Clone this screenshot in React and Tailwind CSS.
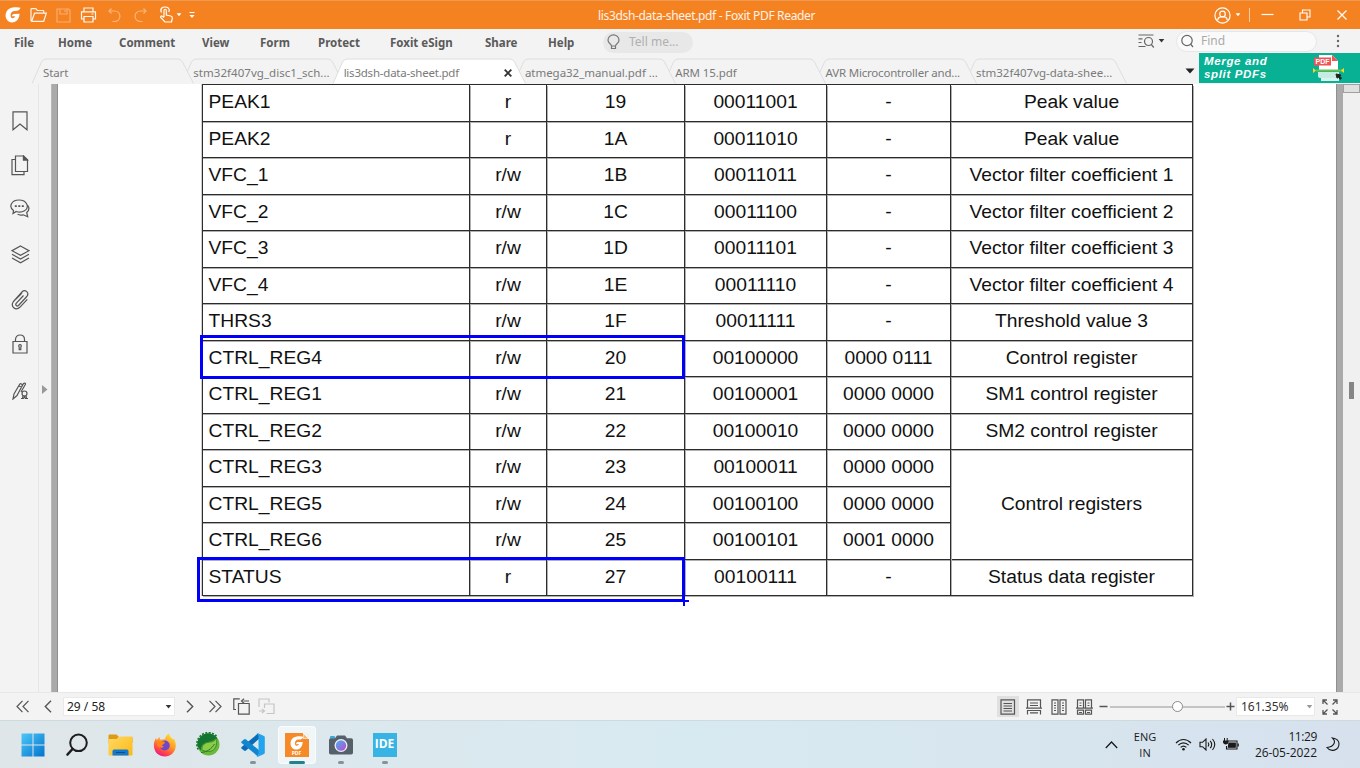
import React from "react";

const MENU = [
  ["File", "w-[44px]"],
  ["Home", "w-[61px]"],
  ["Comment", "w-[83px]"],
  ["View", "w-[58px]"],
  ["Form", "w-[58px]"],
  ["Protect", "w-[72px]"],
  ["Foxit eSign", "w-[95px]"],
  ["Share", "w-[63px]"],
  ["Help", "w-[55px]"],
];

const TABS = [
  { label: "Start", z: "z-[7]", pad: "pl-[11px] tracking-[-0.1px]" },
  { label: "stm32f407vg_disc1_sch...", z: "z-[6]", pad: "pl-[11px] tracking-[0.04px]" },
  { label: "lis3dsh-data-sheet.pdf", z: "z-[9]", pad: "pl-[11px] tracking-[-0.22px]", active: true },
  { label: "atmega32_manual.pdf ...", z: "z-[4]", pad: "pl-[11px] tracking-[-0.04px]" },
  { label: "ARM 15.pdf", z: "z-[3]", pad: "pl-[11px] tracking-[-0.1px]" },
  { label: "AVR Microcontroller and...", z: "z-[2]", pad: "pl-[11px] tracking-[-0.2px]" },
  { label: "stm32f407vg-data-shee...", z: "z-[1]", pad: "pl-[11px]" },
];

const ROWS = [
  ["PEAK1", "r", "19", "00011001", "-", "Peak value"],
  ["PEAK2", "r", "1A", "00011010", "-", "Peak value"],
  ["VFC_1", "r/w", "1B", "00011011", "-", "Vector filter coefficient 1"],
  ["VFC_2", "r/w", "1C", "00011100", "-", "Vector filter coefficient 2"],
  ["VFC_3", "r/w", "1D", "00011101", "-", "Vector filter coefficient 3"],
  ["VFC_4", "r/w", "1E", "00011110", "-", "Vector filter coefficient 4"],
  ["THRS3", "r/w", "1F", "00011111", "-", "Threshold value 3"],
  ["CTRL_REG4", "r/w", "20", "00100000", "0000 0111", "Control register"],
  ["CTRL_REG1", "r/w", "21", "00100001", "0000 0000", "SM1 control register"],
  ["CTRL_REG2", "r/w", "22", "00100010", "0000 0000", "SM2 control register"],
  ["CTRL_REG3", "r/w", "23", "00100011", "0000 0000", "Control registers"],
  ["CTRL_REG5", "r/w", "24", "00100100", "0000 0000", null],
  ["CTRL_REG6", "r/w", "25", "00100101", "0001 0000", null],
  ["STATUS", "r", "27", "00100111", "-", "Status data register"],
];

function Icon({ w, h, className = "", children, ...rest }) {
  return (
    <svg width={w} height={h} viewBox={`0 0 ${w} ${h}`} fill="none" stroke="currentColor" strokeWidth="1.2" className={`shrink-0 ${className}`} {...rest}>
      {children}
    </svg>
  );
}

function Caret({ className = "" }) {
  return (
    <Icon w={7} h={4} className={className} stroke="none" fill="currentColor">
      <path d="M0.7 0h5.6L3.5 3.6z" />
    </Icon>
  );
}

function FoxitMark({ size, className = "" }) {
  return (
    <svg width={size} height={size} viewBox="0 0 16 16" className={`shrink-0 ${className}`}>
      <path fill="#fff" d="M15.6 .8C12.500-.2 7.600-.1 4.200 1.700C.7 3.800-.2 8.300 1.200 11.600C2.700 15.200 6.600 16.200 9.600 15C12.700 13.800 14.300 11 14.600 6.800L8.800 6.900C7.800 7 7 8.200 6.800 9.300L10.200 9.200C9.500 10.900 8.100 11.500 6.900 11C5.200 10.200 5.200 7.400 6.400 5.600C7.300 4.300 9 3.900 10.500 4C12.800 4.100 14.500 3 15.600 .8z" />
    </svg>
  );
}

function TitleBar() {
  return (
    <div className="relative flex h-[29px] items-center border-t border-[#ee9a55] bg-[#f58220] text-white">
      <FoxitMark size={16} className="ml-[5px]" />
      <Icon w={17} h={16} className="ml-[9px] opacity-90">
        <path d="M1 13.500V2.500q0-.8.800-.8h4l1.500 1.800h5.700q.8 0 .8.800v1.500M1 13.500q0 .8.800.8h11.900L16.300 6.200H4.500L1.800 14" />
      </Icon>
      <Icon w={15} h={15} className="ml-[9px] opacity-35">
        <path d="M1 1h11.500L14 2.500V14H1zM4 1v5h7V1M9 2v2" />
      </Icon>
      <Icon w={17} h={16} className="ml-[9px] opacity-95">
        <path d="M4 4.500V1h9v3.500M4 12H1.500V4.800h14V12H13M4 9.500h9V15H4zM11.500 7h2" />
      </Icon>
      <Icon w={13} h={15} className="ml-[11px] opacity-40">
        <path d="M3.500 .5L1 3 3.500 5.500M1.300 3H6.500c7.200 0 7.200 10.500 0 10.500H4.500" />
      </Icon>
      <Icon w={13} h={15} className="ml-[13px] opacity-40">
        <path d="M9.500 .5L12 3 9.500 5.500M11.700 3H6.500c-7.200 0-7.200 10.500 0 10.500h2" />
      </Icon>
      <Icon w={15} h={18} className="ml-[12px]">
        <path d="M5 11V4.500c0-1.700 2.300-1.700 2.300 0V9l4.500 1c1.500.4 1.700 1 1.500 2.300L12.500 16H6L1.700 11.500c-.6-1 .7-2 1.700-1.200L5 11.500M2.500 6.500C.5 2.500 3.500 1 6 1s5.500 1.500 3.800 5" />
      </Icon>
      <Caret className="ml-[2px] w-[6px]" />
      <Icon w={6} h={8} className="ml-[7px]" strokeWidth="1">
        <path d="M.5 1.500h5" />
        <path d="M.5 4h5L3 7z" fill="currentColor" stroke="none" />
      </Icon>
      <div className="ml-[403px] whitespace-pre pt-px text-[12px] tracking-[-0.34px] text-white/90">lis3dsh-data-sheet.pdf - Foxit PDF Reader</div>
      <div className="ml-auto flex items-center">
        <Icon w={17} h={17}>
          <circle cx="8.500" cy="8.500" r="7.600" />
          <circle cx="8.500" cy="7" r="2.800" />
          <path d="M3.800 13.200c0-3 2.500-3.500 4.700-3.500s4.700.5 4.700 3.500" />
        </Icon>
        <Caret className="ml-[4px] w-[6px]" />
        <div className="ml-[8px] h-[14px] w-px bg-white/60" />
        <Icon w={13} h={12} className="ml-[11px]"><path d="M.5 5.500h12" /></Icon>
        <Icon w={12} h={12} className="ml-[25px]" strokeWidth="1.100"><path d="M1 4h7v7H1zM3.500 4V1H11v7H8" /></Icon>
        <Icon w={12} h={12} className="ml-[25px] mr-[12px]"><path d="M1.500 1.500l9 9M10.500 1.500l-9 9" /></Icon>
      </div>
    </div>
  );
}

function MenuBar() {
  return (
    <div className="flex h-[24px] items-center pl-[14px] text-[#5a5a5a]">
      {MENU.map(([label, w]) => (
        <div key={label} className={`${w} shrink-0 whitespace-nowrap pt-[3px] text-[11.5px] font-bold leading-[18px]`}>{label}</div>
      ))}
      <div className="mt-[2px] flex h-[21px] w-[90px] items-center rounded-full bg-[#e8e8e8] pl-[4px]">
        <Icon w={13} h={17} className="text-[#777]">
          <path d="M4.500 12C4.500 10 1 9.300 1 6.300a5.500 5.500 0 0 1 11 0c0 3-3.500 3.700-3.500 5.700zM4.500 12.500v2h4v-2" />
        </Icon>
        <span className="ml-[9px] text-[12px] text-[#b0b0b0]">Tell me...</span>
      </div>
      <div className="ml-auto flex items-center">
        <Icon w={17} h={14} className="text-[#666]">
          <path d="M.5 1h15M.5 4.800h4M.5 8.500h3M.5 12.500h7" />
          <circle cx="10.500" cy="7.500" r="4" />
          <path d="M13.300 10.500l2.500 3" />
        </Icon>
        <Caret className="ml-[3px] text-[#333]" />
        <div className="ml-[11px] flex h-[21px] w-[141px] items-center rounded-full border border-[#e6e6e6] bg-[#fafafa] pl-[4px]">
          <Icon w={13} h={14} className="text-[#666]">
            <circle cx="6" cy="6.500" r="5.200" />
            <path d="M9.500 10l2.500 3" />
          </Icon>
          <span className="ml-[7px] text-[12px] text-[#aaa]">Find</span>
        </div>
        <Icon w={4} h={14} className="ml-[19px] mr-[20px] text-[#666]" stroke="none" fill="currentColor">
          <circle cx="2" cy="2" r="1.200" /><circle cx="2" cy="7" r="1.200" /><circle cx="2" cy="12" r="1.200" />
        </Icon>
      </div>
    </div>
  );
}

function Tab({ tab }) {
  const w = tab.active ? 193 : 162;
  return (
    <div className={`relative mr-[-11.7px] flex h-[26px] shrink-0 items-center ${tab.active ? "w-[193px]" : "w-[162px]"} ${tab.pad} ${tab.z}`}>
      <svg width={w} height="26" viewBox={`0 0 ${w} 26`} className="absolute left-0 top-0">
        <path d={`M0 25.500L9.500 4Q11 1 14 1H${w - 16}Q${w - 13} 1 ${w - 11.500} 4L${w - 0.500} 25.500`} fill={tab.active ? "#ffffff" : "#f3f3f3"} stroke="#dedede" />
      </svg>
      <span className="relative whitespace-nowrap pt-[3px] text-[11.5px] text-[#7a7a7a]">{tab.label}</span>
      {tab.active && (
        <Icon w={8} h={8} className="relative ml-auto mr-[14px] mt-[3px] text-[#333]" strokeWidth="1.900"><path d="M.7.7l6.600 6.600M7.300.7L.7 7.300" /></Icon>
      )}
    </div>
  );
}

function TabStrip() {
  return (
    <div className="flex h-[31px]">
      <div className="flex items-end pl-[32px]">
        {TABS.map((t) => <Tab key={t.label} tab={t} />)}
      </div>
      <svg width="10" height="6" viewBox="0 0 10 6" className="ml-auto mr-[4px] mt-[15px] shrink-0"><path d="M.5 .5h9L5 5.500z" fill="#222" /></svg>
      <div className="flex h-[30px] w-[161px] bg-[#08b094]">
        <div className="w-[115px] pl-[5px] pt-[2px] font-['Liberation_Sans',Arial,sans-serif] text-[11.5px] font-bold italic leading-[13px] tracking-[0.65px] text-white">
          <div>Merge and</div>
          <div>split PDFs</div>
        </div>
        <svg width="32" height="29" viewBox="0 0 32 29" className="-ml-px mt-px">
          <path d="M6 1h13l6 6v9H6z" fill="#fff" />
          <path d="M19 1l6 6h-6z" fill="#f25555" />
          <rect x="1" y="3.500" width="17" height="8" fill="#ef5454" />
          <text x="2.500" y="10" fontSize="7" fontWeight="700" fill="#fff" fontFamily="Liberation Sans, sans-serif">PDF</text>
          <path d="M5 18h21v6H7q-2 0-2-2z" fill="#c4ece3" />
          <path d="M8 24h18v3H8z" fill="#d9f3ed" />
          <path d="M3 16.500h26" stroke="#6cc04a" strokeWidth="2" />
          <path d="M0 14l3 2.500L0 19zM31 14l-3 2.500 3 2.500z" fill="#f5dc1e" />
          <path d="M23 20l5 1-1 1.300 1.500 2-1.500 1-1.400-2-1.600.8z" fill="#222" stroke="#222" />
        </svg>
      </div>
    </div>
  );
}

function Sidebar() {
  const slot = "flex h-[45px] items-center justify-center";
  return (
    <div className="flex w-[58px] shrink-0 bg-[#f3f3f3]">
      <div className="w-[39px] border-r border-[#e6e6e6] pl-px pt-[14px] text-[#555]">
        <div className={slot}><Icon w={16} h={20}><path d="M1 .8h14v18L8 13l-7 5.800z" /></Icon></div>
        <div className={slot}>
          <Icon w={18} h={21} className="-mt-px">
            <path d="M4.500 1h8l4 4v11.500h-12zM12.500 1v4h4M4.500 4.500H1v15.200h12v-3" />
            <path d="M12.500 1l4 4h-4z" fill="currentColor" />
          </Icon>
        </div>
        <div className={slot}>
          <Icon w={20} h={19} className="-mt-[4px]">
            <path d="M3.500 11.500C-1.500 8 1 1 9 1s11 7.500 5.500 10.700c-2.500 1.500-6 1.500-8.300.8L3 14.500z" />
            <path d="M17.500 6c2 2.500 1.500 5.500-.8 7.500l1 4.300-4.500-2c-2.200.4-4.300.2-5.600-.5" />
            <path d="M4.800 7.200h2M8.300 7.200h2M11.800 7.200h2" strokeWidth="1.800" />
          </Icon>
        </div>
        <div className={slot}>
          <Icon w={19} h={19} className="-mt-[2px] ml-px">
            <path d="M9.500 1L18 5.700 9.500 10.300 1 5.700zM1 9.300l8.500 4.700L18 9.300M1 13l8.500 4.800L18 13" />
          </Icon>
        </div>
        <div className={slot}>
          <Icon w={18} h={20} className="-mt-[2px] ml-px">
            <path d="M12.500 5.500l-7.300 7.800c-1.300 1.800.8 3.500 2.300 2.200l8.300-9c3-4-1.800-7.500-4.800-4.500L2.500 11.500c-3.500 4.800 2 9.800 6.300 5.800l7.500-8M5 9l6-6" />
          </Icon>
        </div>
        <div className={slot}>
          <Icon w={16} h={20} className="-mt-[3px]">
            <path d="M1 7.500h14V19H1zM3.500 7.500V5.500c0-6 9-6 9 0v2" />
            <path d="M7.200 13.200c-2.200-3.400 3.800-3.400 1.600 0v2.500H7.200z" />
          </Icon>
        </div>
        <div className={slot}>
          <Icon w={17} h={18} className="ml-[2px]">
            <path d="M1 17l1-5L7.500 2.500c1-1.500 3.300-.5 2.500 1.500L5 13.500zM7 4l3 1.500M8 8l3.500-6.500c1.500-1 2.300 0 1.800 1L9 10" />
            <circle cx="12.500" cy="11.500" r="2.500" />
            <path d="M9 16.500h2.500l1-2 1 2H16" />
            <path d="M11 14l-.5 2M14 14l.5 2" />
          </Icon>
        </div>
      </div>
      <div className="flex w-[12px] items-start pt-[301px]">
        <Icon w={6} h={9} className="ml-[3px] text-[#999]" stroke="none" fill="currentColor"><path d="M0 0l5.500 4.500L0 9z" /></Icon>
      </div>
      <div className="w-[7px] border-l border-r border-l-[#b8b8b8] border-r-[#8f8f8f] bg-[#aaa]" />
    </div>
  );
}

function Register({ row, index }) {
  const cell = "flex items-center justify-center border-b border-r border-[#2c2c2c] pb-[1px] shadow-[1px_1px_0_0_#b0b0b0]";
  const merged = index >= 10 && index <= 12;
  return (
    <>
      <div className={`${cell} border-l !justify-start pl-[5.500px]`}>{row[0]}</div>
      <div className={cell}>{row[1]}</div>
      <div className={cell}>{row[2]}</div>
      <div className={cell}>{row[3]}</div>
      <div className={cell}>{row[4]}</div>
      {row[5] && <div className={`${cell} ${merged ? "row-span-3" : ""}`}>{row[5]}</div>}
    </>
  );
}

function Document() {
  return (
    <div className="relative min-w-0 flex-1 bg-white pl-[144px]">
      <div className="grid w-[991px] grid-cols-[268px_77px_138px_142px_124px_242px] grid-rows-[repeat(14,36.53px)] border-t border-[#2c2c2c] font-['Liberation_Sans',Arial,sans-serif] text-[19.25px] leading-[24px] text-[#111] shadow-[-1px_0_0_0_#d0d0d0]">
        {ROWS.map((r, i) => <Register key={r[0]} row={r} index={i} />)}
      </div>
      <div className="absolute left-[142px] top-[251px] h-[44px] w-[485px] border-[3px] border-[#0000fa]" />
      <div className="absolute left-[139px] top-[473px] h-[45px] w-[488px] border-[3px] border-[#0000fa]" />
      <div className="absolute left-[625px] top-[516px] h-[6px] w-[2px] bg-[#0000fa]" />
      <div className="absolute left-[622px] top-[516px] h-[2px] w-[9px] bg-[#0000fa]" />
    </div>
  );
}

function ScrollTrack() {
  return (
    <div className="flex w-[24px] shrink-0 bg-[#f0f0f0]">
      <div className="w-[7px] border-l border-[#8f8f8f] bg-[#aaa]" />
      <div className="w-[17px]">
        <div className="h-[9px] w-[17px] border border-[#a0a0a0] bg-[#e0e0e0]" />
        <div className="ml-[6px] mt-[289px] h-[17px] w-[5px] bg-[#858585]" />
      </div>
    </div>
  );
}

function StatusBar() {
  return (
    <div className="flex h-[28px] shrink-0 items-center border-t border-[#e8e8e8] bg-[#f3f3f3] text-[#555]">
      <Icon w={13} h={13} className="ml-[16px]"><path d="M6.500.8L1 6.500l5.500 5.700M12.500.8L7 6.500l5.500 5.700" /></Icon>
      <Icon w={8} h={13} className="ml-[15px]" strokeWidth="1.400"><path d="M7 .8L1.300 6.500 7 12.200" /></Icon>
      <div className="ml-[11px] flex h-[19px] w-[112px] items-center border border-[#e9e9e9] bg-white pl-[3px] text-[12px] text-[#222]">
        <span>29 / 58</span>
        <Caret className="ml-auto mr-[2px] h-[4px] w-[7px] text-[#333]" />
      </div>
      <Icon w={8} h={13} className="ml-[11px]" strokeWidth="1.400"><path d="M1 .8l5.700 5.700L1 12.200" /></Icon>
      <Icon w={13} h={13} className="ml-[15px]"><path d="M.5.8L6 6.500.5 12.200M6.500.8L12 6.500l-5.500 5.700" /></Icon>
      <Icon w={17} h={17} className="ml-[11px]"><path d="M5.500 5.500h10.700v10.700H5.500zM3 11.500H.8V.8h6M10.500 3H16M11 .8L8.500 3 11 5.200" /></Icon>
      <Icon w={17} h={17} className="ml-[8px] text-[#c5c5c5]"><path d="M9 6h7v9.500H8.500M6.500 10V6H9M1 9V1h10v3.500M1 13h5.500M4 11l2.500 2L4 15" /></Icon>
      <div className="ml-auto flex items-center">
        <div className="flex h-[21px] w-[22px] items-center justify-center bg-[#e0e0e0]">
          <Icon w={16} h={16}><path d="M1 .8h13.500v14.400H1zM3.500 4.500H12M3.500 7H12M3.500 9.500H12M3.500 12H12" /></Icon>
        </div>
        <Icon w={16} h={16} className="ml-[7px]"><path d="M1.500 9V.8h13V9M4 4h8M4 6.500h8M0 9.200h16M1.500 15.500v-4h13v4M4 13.800h8" /></Icon>
        <Icon w={16} h={16} className="ml-[9px]"><path d="M1 .8h6v14.400H1zM9 .8h6v14.400H9zM3 4h2M3 6.500h2M3 9h2M3 11.500h2M11 4h2M11 6.500h2M11 9h2M11 11.500h2" /></Icon>
        <Icon w={17} h={16} className="ml-[9px]"><path d="M1.500 9V.8h6V9M9.500 9V.8h6V9M3.500 4h2M3.500 6.500h2M11.500 4h2M11.500 6.500h2M0 9.200h17M1.500 15.200v-4h6v4zM9.500 15.200v-4h6v4zM3 13.500h3M11 13.500h3" /></Icon>
        <Icon w={9} h={10} className="ml-[6px]" strokeWidth="1.500"><path d="M.5 4.500h8" /></Icon>
        <div className="relative ml-[2px] h-[12px] w-[115px]">
          <div className="mt-[5px] h-[2px] bg-[#c4c4c4]" />
          <div className="absolute left-[62px] top-[0.500px] h-[11px] w-[11px] rounded-full border border-[#8a8a8a] bg-white" />
        </div>
        <Icon w={9} h={10} className="ml-px" strokeWidth="1.500"><path d="M.5 4.500h8M4.500.5v8" /></Icon>
        <div className="ml-px flex h-[19px] w-[79px] items-center border border-[#e9e9e9] bg-white pl-[4px] text-[12px] text-[#333]">
          <span>161.35%</span>
          <Caret className="ml-auto mr-[1px] text-[#999]" />
        </div>
        <Icon w={16} h={16} className="ml-[7px] mr-[22px]" strokeWidth="1.300"><path d="M1 5V1h4M1 1l4.500 4.500M11 1h4v4M15 1l-4.500 4.500M1 11v4h4M1 15l4.500-4.500M15 11v4h-4M15 15l-4.500-4.500" /></Icon>
      </div>
    </div>
  );
}

function Slot({ children, running, active }) {
  return (
    <div className={`relative flex h-[38px] w-[38px] shrink-0 items-center justify-center rounded ${active ? "border border-white/70 bg-white/60" : ""}`}>
      {children}
      {running && <div className={`absolute h-[3px] rounded-full ${active ? "bottom-[-1px] w-[16px] bg-[#24808e]" : "bottom-0 w-[6px] bg-[#85929a]"}`} />}
    </div>
  );
}

function Taskbar() {
  return (
    <div className="flex h-[48px] shrink-0 items-center border-t border-[#cddbe0] bg-linear-to-r from-[#dfe6e9] via-[#d8eaf1] via-50% to-[#d6e1ed] font-['Open_Sans',sans-serif] text-[#1a1a1a]">
      <div className="ml-[13.500px] flex gap-[6px]">
        <Slot>
          <svg width="24" height="24" viewBox="0 0 24 24">
            <defs><linearGradient id="win" x1="0" y1="0" x2="1" y2="1"><stop offset="0" stopColor="#4cc8f7" /><stop offset="1" stopColor="#0473ce" /></linearGradient></defs>
            <path d="M.5.5h11v11H.5zM12.500.5h11v11h-11zM.5 12.500h11v11H.5zM12.500 12.500h11v11h-11z" fill="url(#win)" />
          </svg>
        </Slot>
        <Slot>
          <Icon w={24} h={24} className="text-[#1e1e1e]" strokeWidth="2"><circle cx="13.500" cy="9.800" r="8.300" /><path d="M7.500 16L2.500 21.500" strokeLinecap="round" strokeWidth="2.600" /></Icon>
        </Slot>
        <Slot>
          <svg width="25" height="22" viewBox="0 0 25 22">
            <defs><linearGradient id="fold" x1="0" y1="0" x2="1" y2="1"><stop offset="0" stopColor="#ffd968" /><stop offset="1" stopColor="#fbb913" /></linearGradient></defs>
            <path d="M.5 1.500Q.5.500 1.500.500H8.500L11 3H23.500Q24.500 3 24.500 4V9H.5z" fill="#dc9b12" />
            <path d="M.5 5H8.500L11 2.500H24.500V20.500Q24.500 21.500 23.500 21.500H1.500Q.5 21.500.5 20.500z" fill="url(#fold)" />
            <path d="M4.500 21.500V17q0-1.500 1.500-1.500h13q1.500 0 1.500 1.500v4.500z" fill="#1379cf" />
            <path d="M8 18.500h9" stroke="#064a8a" />
          </svg>
        </Slot>
        <Slot>
          <svg width="24" height="24" viewBox="0 0 24 24">
            <defs>
              <linearGradient id="ff" x1=".8" y1="0" x2=".25" y2="1"><stop offset="0" stopColor="#ffe33d" /><stop offset=".45" stopColor="#ff9a24" /><stop offset=".8" stopColor="#ff3d4d" /><stop offset="1" stopColor="#e3169a" /></linearGradient>
            </defs>
            <path d="M3 5l.7 2L6.500 4l.5 2.500q3 0 5-.5C12.500 3.500 14 1.500 16 .5c.5 3 2.500 4 4 6l1-1c3 6 2 11.500-1.500 15-4 4-11 4-15.500 0C0 16 0 9.500 3 5z" fill="url(#ff)" />
            <circle cx="11.800" cy="12.500" r="5" fill="#7146c8" />
            <path d="M4 9c2-2 4-.5 6-.5 2.500 0 2.500 2 0 3-1.500.5-1 2 1 2-2 2-4.500 1-6 0-1-1.500-1-3-1-4.500z" fill="#ff851b" />
          </svg>
        </Slot>
        <Slot>
          <svg width="25" height="25" viewBox="0 0 25 25">
            <circle cx="12.500" cy="12.500" r="11" fill="#6cb83c" />
            <path d="M1.500 14A11 11 0 0 1 21 5.500q-3 3.500-9 4.500C4 11.500 5 19 5 19z" fill="#13752f" />
            <path d="M2.200 17.500A11.500 11.500 0 0 1 20.500 4" fill="none" stroke="#13752f" strokeWidth="1.600" strokeDasharray="2 1.400" />
            <path d="M6 18C5.500 13 9 10.500 13.500 10.200 17.500 10 19.500 8 20.500 6c1 7-1 13.500-8 13.500-2.500 0-4.500-.5-6.500-1.500z" fill="#8bcb45" stroke="#1f7a2e" strokeWidth=".7" />
            <path d="M5 20.500c6-.5 10.500-3.500 13.500-8.500" fill="none" stroke="#1f7a2e" strokeWidth="1" />
          </svg>
        </Slot>
        <Slot running>
          <svg width="24" height="24" viewBox="0 0 24 24">
            <path d="M17 .5L19 5 5 17.500q-1 .8-2 0L.6 15.500q-.7-.7 0-1.500z" fill="#0b6cb3" />
            <path d="M.6 8.600L3 6.500q1-.8 2 0L19 18l-2 5.500L.6 10.100q-.7-.8 0-1.500z" fill="#1186d0" />
            <path d="M17 .3l6 2.700q.8.400.8 1.200v15.600q0 .8-.8 1.200l-6 2.700q-1 .3-1.500-.5 2 .5 2-1.200V2q0-1.700-2-1.200.5-.8 1.500-.5z" fill="#22a3ee" />
          </svg>
        </Slot>
        <Slot running active>
          <div className="relative flex h-[24px] w-[24px] items-start justify-center bg-[#f68a28]">
            <FoxitMark size={14} className="mt-[3px]" />
            <svg width="6" height="6" viewBox="0 0 6 6" className="absolute right-0 top-0"><path d="M0 0h6v6z" fill="#eaf3f6" /><path d="M0 0v6h6z" fill="#fbb673" stroke="#fff" strokeWidth=".8" /></svg>
            <span className="absolute bottom-[1px] text-[5px] font-bold leading-[5px] text-white">PDF</span>
          </div>
        </Slot>
        <Slot running>
          <svg width="24" height="20" viewBox="0 0 24 20">
            <path d="M1 3.500V2Q1 1 2 1h3q1 0 1 1v1.500z" fill="#36a9e0" />
            <path d="M0 5q0-1.800 1.800-1.800H6L8 .5h8l2 2.700h4.200Q24 3.200 24 5v12.700q0 1.800-1.800 1.800H1.800Q0 19.500 0 17.700z" fill="#56606a" />
            <circle cx="12" cy="10.500" r="6.500" fill="#eef2f5" />
            <defs><linearGradient id="lens" x1="0" y1="0" x2="1" y2="1"><stop offset="0" stopColor="#43b4f0" /><stop offset="1" stopColor="#c047d3" /></linearGradient></defs>
            <circle cx="12" cy="10.500" r="5.200" fill="url(#lens)" />
          </svg>
        </Slot>
        <Slot running>
          <div className="flex h-[24px] w-[24px] items-center justify-center bg-[#37b4e4] pb-px text-[12px] font-bold tracking-[-0.1px] text-white">IDE</div>
        </Slot>
      </div>
      <div className="ml-auto flex items-center">
        <Icon w={13} h={8} strokeWidth="1.300"><path d="M.8 7l5.700-6 5.700 6" /></Icon>
        <div className="ml-[14px] w-[26px] text-center text-[11px] leading-[16px]"><div>ENG</div><div>IN</div></div>
        <Icon w={17} h={13} className="ml-[17px]" strokeWidth="1.200">
          <path d="M1 5c4.500-4.700 10.500-4.700 15 0M3.300 7.200c3.200-3.200 7.200-3.200 10.400 0M5.600 9.400c2-1.900 3.800-1.900 5.800 0" />
          <circle cx="8.500" cy="11.300" r="1.300" fill="currentColor" stroke="none" />
        </Icon>
        <Icon w={17} h={13} className="ml-[7px]" strokeWidth="1.100">
          <path d="M1 4.300h2.500L7 1v11L3.500 8.700H1zM9 4.500q1.500 2 0 4M11.200 2.800q3 3.700 0 7.400M13.500 1q4.500 5.500 0 11" />
        </Icon>
        <Icon w={16} h={13} className="ml-[7px]" strokeWidth="1.100">
          <path d="M5 3h9v8H3.500V8" />
          <path d="M6 5h6.300v4.300H5.300z" fill="currentColor" />
          <path d="M14.500 5.500h1.300v3h-1.300zM0 2.500h5.500v2q-.5 2-2.700 2T0 4.500zM1 0h1v3H1zM3.700 0h1v3h-1z" fill="currentColor" stroke="none" />
        </Icon>
        <div className="ml-[9px] w-[69px] text-right text-[12px] leading-[16px]"><div className="tracking-[-0.4px]">11:29</div><div className="tracking-[-0.05px]">26-05-2022</div></div>
        <Icon w={14} h={15} className="ml-[9px] mr-[20px]" strokeWidth="1.100"><path d="M6.500 1c3.500 3 2.500 8.500-5.500 9.500 3.500 5 12 3.200 12-3.800C13 4 10.500 1.300 6.500 1z" /></Icon>
      </div>
    </div>
  );
}

export default function App() {
  return (
    <div className="flex h-[768px] w-[1360px] flex-col overflow-hidden bg-[#f3f3f3] font-['Noto_Sans',Tahoma,sans-serif]">
      <header className="h-[84px] shrink-0">
        <TitleBar />
        <MenuBar />
        <TabStrip />
      </header>
      <main className="flex h-[608px] shrink-0">
        <Sidebar />
        <Document />
        <ScrollTrack />
      </main>
      <StatusBar />
      <Taskbar />
    </div>
  );
}
